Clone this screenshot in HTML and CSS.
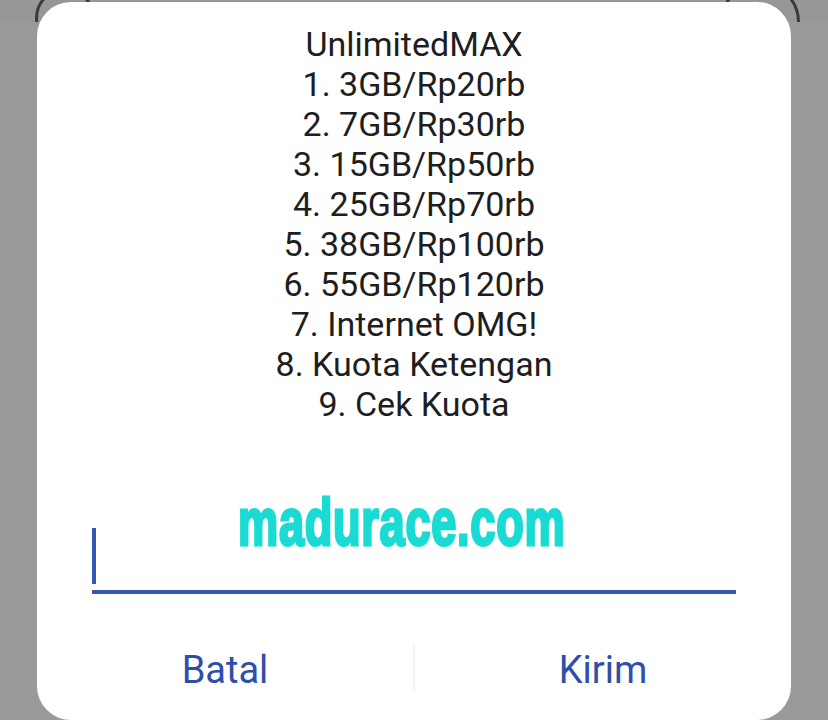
FILE: index.html
```html
<!DOCTYPE html>
<html lang="id">
<head>
    <meta charset="UTF-8">
    <title>USSD</title>

    <link rel="stylesheet" href="styles.css">

</head>
<body>

<div class="screen">
    <div class="appbar">
        <span class="ring ring_left"></span>
        <span class="ring ring_right"></span>
    </div>
</div>

<div class="dialog">
    <div class="message">
        <div>UnlimitedMAX</div>
        <div>1. 3GB/Rp20rb</div>
        <div>2. 7GB/Rp30rb</div>
        <div>3. 15GB/Rp50rb</div>
        <div>4. 25GB/Rp70rb</div>
        <div>5. 38GB/Rp100rb</div>
        <div>6. 55GB/Rp120rb</div>
        <div>7. Internet OMG!</div>
        <div>8. Kuota Ketengan</div>
        <div>9. Cek Kuota</div>
    </div>

    <div class="field">
        <span class="caret"></span>
    </div>

    <div class="actions">
        <button type="button">Batal</button>
        <span class="divider"></span>
        <button type="button">Kirim</button>
    </div>

    <div class="watermark">madurace.com</div>
</div>

</body>
</html>
```

FILE: styles.css
```css
html, body{
    margin: 0;
    height: 100%;
    overflow: hidden;
}

body{
    background-color: #9a9a9a;
    font-family: Roboto, "Noto Sans", sans-serif;
}

.screen{
    height: 100%;
}

.appbar{
    height: 22px;
    background-color: #979797;
    display: flex;
    justify-content: space-between;
    overflow: hidden;
}

/* icons of the app behind the dim layer, mostly covered */
.ring{
    display: block;
    border: 3px solid #3a3a3a;
    border-radius: 50%;
    box-sizing: border-box;
}

.ring_left{
    width: 60px;
    height: 60px;
    margin: -12px 0 0 35px;
}

.ring_right{
    width: 80px;
    height: 80px;
    margin: -18px 28px 0 0;
}

.dialog{
    position: absolute;
    top: 2px;
    left: 37px;
    width: 754px;
    height: 718px;
    background-color: #ffffff;
    border-radius: 34px;
}

.message{
    padding-top: 22px;
    text-align: center;
    font-size: 34px;
    line-height: 40px;
    color: #1e1e1e;
}

.field{
    margin: 104px 55px 0;
    height: 62px;
    border-bottom: 4px solid #3457b3;
}

.caret{
    display: block;
    width: 4px;
    height: 56px;
    background-color: #3457b3;
}

.actions{
    display: flex;
    align-items: center;
    margin-top: 46px;
    height: 60px;
}

.actions button{
    flex: 1;
    height: 60px;
    border: 0;
    background: none;
    font-family: Roboto, sans-serif;
    font-size: 38px;
    line-height: 60px;
    color: #2e4fa9;
    padding: 0;
}

.divider{
    width: 2px;
    height: 47px;
    background-color: #f2f2f2;
    margin-top: -5px;
}

/* heavy condensed stamp over the field */
.watermark{
    position: absolute;
    top: 487px;
    left: 201px;
    font-family: "Liberation Sans", Arial, sans-serif;
    font-weight: bold;
    font-size: 66px;
    line-height: 67px;
    color: #1adbd3;
    -webkit-text-stroke: 3px #1adbd3;
    letter-spacing: 1px;
    transform: scaleX(0.685);
    transform-origin: left top;
    white-space: nowrap;
}
```
